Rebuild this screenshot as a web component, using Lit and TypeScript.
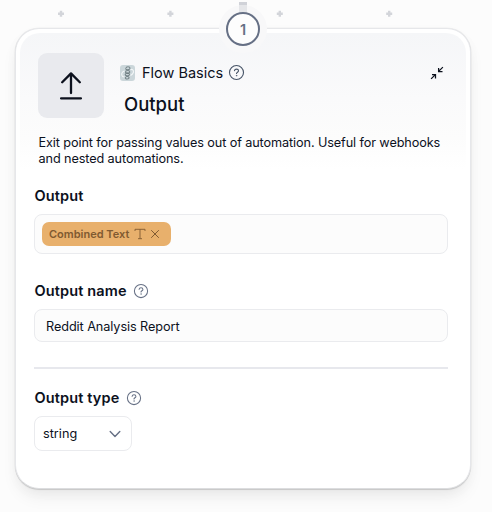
import { LitElement, html, css, svg } from "lit";
import { customElement, property } from "lit/decorators.js";

@customElement("help-icon")
class HelpIcon extends LitElement {
  static styles = css`
    :host { display: block; width: 16px; height: 16px; flex: none; color: #667085; }
    svg { display: block; width: 100%; height: 100%; }
  `;
  render() {
    return html`<svg viewBox="0 0 16 16" fill="none" stroke="currentColor" stroke-width="1.05" stroke-linecap="round" stroke-linejoin="round">
      <circle cx="8" cy="8" r="6.6"></circle>
      <path d="M6.1 6.3C6.3 5.3 7 4.8 8 4.8c1.1 0 1.9.6 1.9 1.6C9.9 7.7 8 7.7 8 9"></path>
      <circle cx="8" cy="11" r=".35" fill="currentColor" stroke-width=".5"></circle>
    </svg>`;
  }
}

@customElement("field-label")
class FieldLabel extends LitElement {
  @property() text = "";
  @property({ type: Boolean }) help = false;
  static styles = css`
    :host { display: flex; align-items: center; gap: 6.5px; height: 20px; }
    .text { font-size: 14.5px; font-weight: 600; line-height: 20px; letter-spacing: 0.13px; margin-left: .5px; color: #0c111d; white-space: nowrap; }
  `;
  render() {
    return html`<span class="text">${this.text}</span>${this.help ? html`<help-icon></help-icon>` : ""}`;
  }
}

@customElement("app-root")
class AppRoot extends LitElement {
  static styles = css`
    :host {
      display: block; width: 492px; height: 512px; overflow: hidden; position: relative;
      background: #fcfcfc; font-family: Inter, "Liberation Sans", sans-serif; color: #0c111d;
    }
    * { box-sizing: border-box; }
    svg { display: block; flex: none; }
    .canvas { width: 492px; height: 28px; }
    .card {
      width: 456px; height: 461px; margin-left: 15px; padding: 4px;
      background: #fff; border: 1px solid #e6e7ea; border-bottom-color: #dcdddf; border-radius: 24px;
      box-shadow: 0 0 0 .5px rgba(0,0,0,.05), 0 1px 1px rgba(0,0,0,.13), 0 10px 18px -4px rgba(0,0,0,.08), 0 4px 14px rgba(0,0,0,.025);
    }
    .body {
      height: 100%; padding: 20px 18px 0 14px; border-radius: 20px;
      background: linear-gradient(#f5f6f8 0, #fafafb 65px, #fcfcfc 105px, #fff 136px);
    }
    .head { display: flex; padding-left: 4px; height: 65px; }
    .tile { width: 66px; height: 65px; border-radius: 9px; background: #e9eaee; display: flex; align-items: center; justify-content: center; }
    .titles { margin-left: 16px; flex: 1; }
    .group { display: flex; align-items: center; height: 20px; margin-top: 10px; }
    .name { margin: -2px 0 0 7px; font-size: 14.5px; letter-spacing: 0; width: 81px; white-space: nowrap; }
    .group help-icon { margin: -1px 0 0 5px; color: #475467; width: 17px; height: 17px; }
    .title { margin: 9px 0 0 4px; font-size: 18.5px; line-height: 24px; font-weight: 500; }
    .collapse { margin: 13px 4px 0 0; }
    .desc { margin: 17px 0 0 4.5px; font-size: 12.7px; line-height: 16px; letter-spacing: -0.11px; white-space: nowrap; }
    .l1 { margin-top: 19px; }
    .box { border: 1px solid #eaebee; border-radius: 8px; background: #fcfcfc; display: flex; align-items: center; }
    .tags { height: 40px; margin-top: 8px; padding-left: 7px; }
    .chip { width: 129px; height: 24px; border-radius: 7px; background: #e8b06c; color: #805a31; display: flex; align-items: center; padding-left: 7px; font-size: 11px; letter-spacing: 0; font-weight: 600; }
    .chip .label { width: 84px; white-space: nowrap; }
    .chip .close { margin-left: 3px; }
    .l2 { margin-top: 27px; }
    .input { height: 33px; margin-top: 8px; padding: 1px 0 0 11px; font-size: 12.7px; letter-spacing: -0.08px; }
    .rule { height: 2px; background: #e7e8ed; margin-top: 25px; }
    .l3 { margin-top: 19px; }
    .select { width: 98px; height: 35px; margin-top: 8px; padding: 0 10px 0 8px; background: #fff; justify-content: space-between; font-size: 12.7px; }
    .badge {
      position: absolute; left: 219px; top: 5px; width: 48px; height: 48px; border-radius: 50%;
      background: #f8f8f9; display: flex; align-items: center; justify-content: center;
    }
    .number {
      width: 34px; height: 34px; border-radius: 50%; background: #fdfdfd; border: 2px solid #667085; color: #667085;
      display: flex; align-items: center; justify-content: center; font-size: 14.5px; font-weight: 600;
    }
    .stem { position: absolute; left: 239px; top: 2px; width: 8px; height: 10px; background: linear-gradient(#d0d2d8 3px, #e5e6e9 3px); z-index: 1; }
  `;

  render() {
    return html`
      <svg class="canvas" viewBox="0 0 492 28" fill="none" stroke="#d3d5da" stroke-width="2.4">
        ${[61, 170.4, 279.8, 389.2].map((x) => svg`<path d="M${x - 3} 13.7h6M${x} 10.7v6"></path>`)}
      </svg>
      <section class="card">
        <div class="body">
          <header class="head">
            <div class="tile">
              <svg width="22" height="28" viewBox="0 0 22 28" fill="none" stroke="#0c111d" stroke-width="2.3" stroke-linecap="round" stroke-linejoin="round">
                <path d="M11 21V1.5M2.2 10.2 11 1.4l8.8 8.8M1.1 26.3h19.8"></path>
              </svg>
            </div>
            <div class="titles">
              <div class="group">
                <svg width="15" height="16" viewBox="0 0 15 16" fill="none">
                  <rect width="15" height="16" rx="3" fill="#cbd6da"></rect>
                  <path d="M4.5 6C1.5 7 1 9.5 2.5 11.5l2 .5M10.5 4.5c3-.5 4 2 2 4.5l-2 1.5" stroke="#f3f6f7" stroke-width="1.1"></path>
                  <path d="M6 3.2c0-2 4-2 4 0S5.5 5 5.5 7s4.3 1.8 4.3 0S5.3 5 5.5 3.4M5.2 9.5c0-2 4.3-2 4.3 0s-4.2 1.6-4.2 3.3 3.8 1.5 3.8 0-4-1.5-3.9-3.3" stroke="#77868a" stroke-width="1.1"></path>
                  <path d="M6.3 5h3M6 8.2h3M6 11h3" stroke="#68777b" stroke-width=".8"></path>
                </svg>
                <span class="name">Flow Basics</span>
                <help-icon></help-icon>
              </div>
              <div class="title">Output</div>
            </div>
            <svg class="collapse" width="14" height="14" viewBox="0 0 14 14" fill="none" stroke="#0c111d" stroke-width="1.25">
              <path d="M12.9 1.1 8.6 5.4M8.6 2V5.5h3.9M1.1 12.9l4.3-4.3M2 8.5h3.5v3.9"></path>
            </svg>
          </header>
          <div class="desc">Exit point for passing values out of automation. Useful for webhooks<br />and nested automations.</div>
          <field-label class="l1" text="Output"></field-label>
          <div class="box tags">
            <div class="chip">
              <span class="label">Combined Text</span>
              <svg width="14" height="12" viewBox="0 0 14 12" fill="none" stroke="currentColor" stroke-width=".9">
                <path d="M2 3V1.3h10V3M7 1.3v9.4M5 10.7h4"></path>
              </svg>
              <svg class="close" width="10" height="10" viewBox="0 0 10 10" fill="none" stroke="currentColor" stroke-width="1">
                <path d="m1.2 1.2 7.6 7.6m0-7.6L1.2 8.8"></path>
              </svg>
            </div>
          </div>
          <field-label class="l2" text="Output name" help></field-label>
          <div class="box input">Reddit Analysis Report</div>
          <div class="rule"></div>
          <field-label class="l3" text="Output type" help></field-label>
          <div class="box select">
            <span>string</span>
            <svg width="12" height="8" viewBox="0 0 12 8" fill="none" stroke="#667085" stroke-width="1.4" stroke-linecap="round" stroke-linejoin="round">
              <path d="m1.2 1.5 4.8 5 4.8-5"></path>
            </svg>
          </div>
        </div>
      </section>
      <div class="stem"></div>
      <div class="badge"><div class="number">1</div></div>
    `;
  }
}
